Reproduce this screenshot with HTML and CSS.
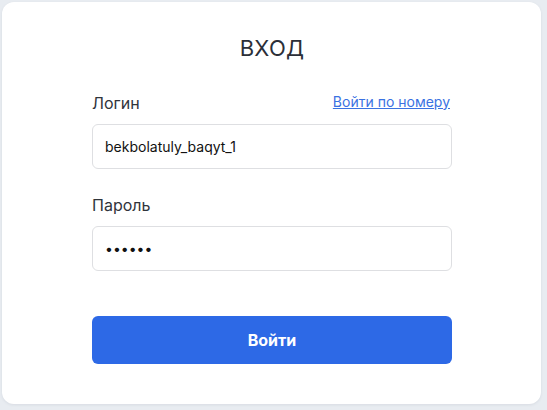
FILE: index.html
```html
<!DOCTYPE html>
<html lang="ru">
<head>
<meta charset="utf-8">
<title>Вход</title>
<link rel="stylesheet" href="styles.css">
</head>
<body>
<main class="card">
  <h1 class="title">ВХОД</h1>
  <form class="form">
    <div class="field">
      <div class="field-head">
        <label class="label" for="login">Логин</label>
        <a class="link" href="#">Войти по номеру</a>
      </div>
      <input class="input" id="login" type="text" value="bekbolatuly_baqyt_1">
    </div>
    <div class="field">
      <div class="field-head">
        <label class="label" for="password">Пароль</label>
      </div>
      <input class="input" id="password" type="password" value="123456">
    </div>
    <button class="button" type="button">Войти</button>
  </form>
</main>
</body>
</html>
```
FILE: styles.css
```css
html, body {
  margin: 0;
  padding: 0;
}
body {
  background: #e8ecf1;
  font-family: Inter, "Noto Sans", sans-serif;
  width: 547px;
  height: 410px;
  overflow: hidden;
}
.card {
  box-sizing: border-box;
  margin: 2px 0 0 2px;
  width: 539px;
  height: 402px;
  background: #ffffff;
  border-radius: 12px;
  box-shadow: 0 1px 3px rgba(30, 40, 60, 0.08);
  padding: 33px 89px 0 90px;
}
.title {
  margin: 0 0 31px;
  font-size: 22px;
  line-height: 27px;
  font-weight: 400;
  text-align: center;
  color: #2b2f38;
  letter-spacing: 0.3px;
}
.form {
  display: flex;
  flex-direction: column;
}
.field + .field {
  margin-top: 26px;
}
.field-head {
  display: flex;
  justify-content: space-between;
  align-items: center;
  height: 20px;
}
.label {
  font-size: 16px;
  line-height: 20px;
  color: #30343b;
}
.link {
  font-size: 14px;
  line-height: 17px;
  color: #3a72e2;
  text-decoration: underline;
  margin-top: -4px;
  margin-right: 2px;
}
.input {
  display: block;
  box-sizing: border-box;
  margin-top: 11px;
  width: 100%;
  height: 45px;
  border: 1px solid #dedfe2;
  border-radius: 6px;
  padding: 0 12px;
  font-family: Inter, "Noto Sans", sans-serif;
  font-size: 14px;
  color: #111111;
  background: #ffffff;
  outline: none;
}
.button {
  margin-top: 45px;
  height: 48px;
  width: 100%;
  border: none;
  border-radius: 6px;
  background: #2d69e6;
  color: #ffffff;
  font-family: Inter, "Noto Sans", sans-serif;
  font-size: 16px;
  font-weight: 700;
}
```
